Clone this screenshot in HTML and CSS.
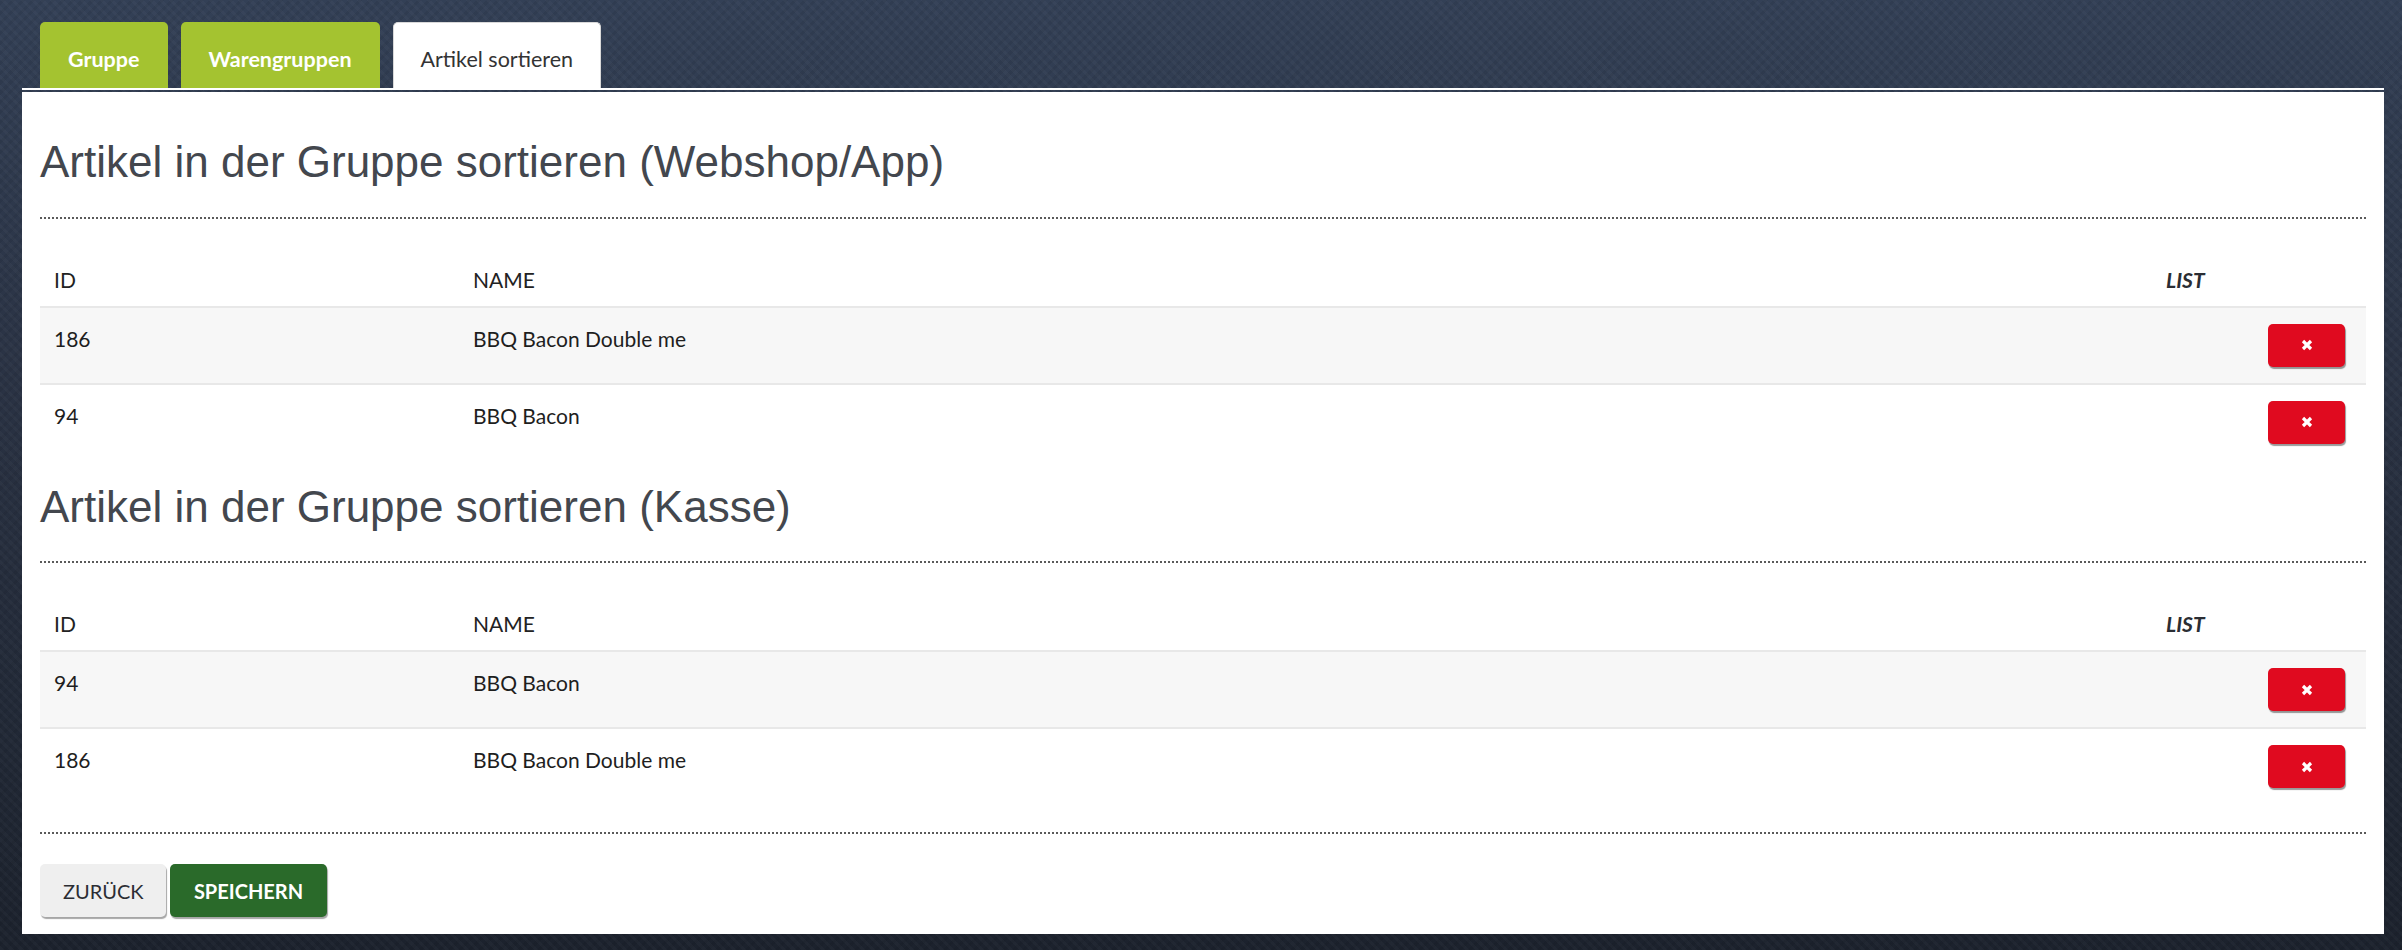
FILE: index.html
```html
<!DOCTYPE html>
<html lang="de">
<head>
    <meta charset="UTF-8">
    <meta name="viewport" content="width=device-width, initial-scale=1.0">
    <title>Artikel sortieren</title>
    <link rel="stylesheet" href="styles.css">
</head>
<body>

<div class="page">
    <ul class="tabs">
        <li class="tab">Gruppe</li>
        <li class="tab">Warengruppen</li>
        <li class="tab active">Artikel sortieren</li>
    </ul>

    <div class="panel">
        <h2 class="title">Artikel in der Gruppe sortieren (Webshop/App)</h2>
        <hr class="sep">

        <table class="sort-table">
            <colgroup>
                <col class="col-id">
                <col>
                <col class="col-list">
                <col class="col-act">
            </colgroup>
            <thead>
                <tr><th>ID</th><th>NAME</th><th class="list">LIST</th><th></th></tr>
            </thead>
            <tbody>
                <tr>
                    <td>186</td>
                    <td>BBQ Bacon Double me</td>
                    <td></td>
                    <td class="act"><button class="btn-del" type="button"><svg width="12" height="12" viewBox="0 0 12 12"><path d="M2 2 L10 10 M10 2 L2 10" stroke="#fff" stroke-width="3.2"/></svg></button></td>
                </tr>
                <tr>
                    <td>94</td>
                    <td>BBQ Bacon</td>
                    <td></td>
                    <td class="act"><button class="btn-del" type="button"><svg width="12" height="12" viewBox="0 0 12 12"><path d="M2 2 L10 10 M10 2 L2 10" stroke="#fff" stroke-width="3.2"/></svg></button></td>
                </tr>
            </tbody>
        </table>

        <h2 class="title">Artikel in der Gruppe sortieren (Kasse)</h2>
        <hr class="sep">

        <table class="sort-table">
            <colgroup>
                <col class="col-id">
                <col>
                <col class="col-list">
                <col class="col-act">
            </colgroup>
            <thead>
                <tr><th>ID</th><th>NAME</th><th class="list">LIST</th><th></th></tr>
            </thead>
            <tbody>
                <tr>
                    <td>94</td>
                    <td>BBQ Bacon</td>
                    <td></td>
                    <td class="act"><button class="btn-del" type="button"><svg width="12" height="12" viewBox="0 0 12 12"><path d="M2 2 L10 10 M10 2 L2 10" stroke="#fff" stroke-width="3.2"/></svg></button></td>
                </tr>
                <tr>
                    <td>186</td>
                    <td>BBQ Bacon Double me</td>
                    <td></td>
                    <td class="act"><button class="btn-del" type="button"><svg width="12" height="12" viewBox="0 0 12 12"><path d="M2 2 L10 10 M10 2 L2 10" stroke="#fff" stroke-width="3.2"/></svg></button></td>
                </tr>
            </tbody>
        </table>

        <hr class="sep end">

        <div class="actions">
            <button class="btn back" type="button">Zurück</button>
            <button class="btn save" type="button">Speichern</button>
        </div>
    </div>
</div>

</body>
</html>
```

FILE: styles.css
```css
html, body {
    height: 100%;
}

body {
    margin: 0;
    font-family: Lato, "Open Sans", sans-serif;
    color: #1e1e1e;
    background-color: #262e3c;
    background-image:
        repeating-linear-gradient(45deg, rgba(255, 255, 255, 0.025) 0 3px, transparent 3px 7px),
        repeating-linear-gradient(-45deg, rgba(0, 0, 0, 0.06) 0 3px, transparent 3px 7px),
        linear-gradient(180deg, #334056 0%, #2b3446 35%, #1c222d 100%);
}

.page {
    padding: 22px 18px 0 22px;
}

/* tabs */
.tabs {
    list-style: none;
    margin: 0 0 2px;
    padding: 0 0 0 18px;
    display: flex;
    gap: 13px;
    border-bottom: 2px solid #ffffff;
}

.tab {
    box-sizing: border-box;
    height: 66px;
    padding: 24px 28px 0;
    font-size: 21.5px;
    line-height: 26px;
    font-weight: 700;
    color: #ffffff;
    background-color: #a4c330;
    border-radius: 5px 5px 0 0;
}

.tab.active {
    background-color: #ffffff;
    color: #333333;
    font-weight: 400;
    border: 1px solid #d9d9d9;
    border-bottom: none;
    padding-top: 23px;
    padding-left: 27px;
    padding-right: 27px;
}

/* panel */
.panel {
    background-color: #ffffff;
    padding: 23px 18px 17px;
}

.title {
    margin: 22px 0 30px;
    font-family: "Liberation Sans", Arial, sans-serif;
    font-weight: 400;
    font-size: 44px;
    line-height: 49.5px;
    color: #43474e;
}

.sep {
    height: 0;
    margin: 0 0 27px;
    border: none;
    border-top: 2px dotted #5a5a5a;
}

.sep.end {
    margin: 28px 0 30px;
}

/* tables */
.sort-table {
    width: 100%;
    table-layout: fixed;
    border-collapse: separate;
    border-spacing: 0;
    font-size: 21px;
}

.col-id {
    width: 419px;
}

.col-list {
    width: 102px;
}

.col-act {
    width: 112px;
}

.sort-table th {
    padding: 20px 14px 12px;
    line-height: 28px;
    text-align: left;
    font-weight: 400;
    color: #222222;
}

.sort-table th.list {
    font-style: italic;
    font-weight: 700;
    color: #2a2d33;
}

.sort-table td {
    padding: 16px 14px;
    line-height: 30px;
    vertical-align: top;
    border-top: 2px solid #e8e8e8;
}

.sort-table tbody tr:nth-child(odd) td {
    background-color: #f7f7f7;
}

.sort-table td.act {
    padding-right: 21px;
}

.btn-del {
    display: flex;
    align-items: center;
    justify-content: center;
    width: 77px;
    height: 43px;
    padding: 0;
    border: none;
    border-radius: 5px;
    background-color: #e00a1f;
    box-shadow: 1px 2px 1px rgba(0, 0, 0, 0.4);
    cursor: pointer;
}

/* footer buttons */
.actions {
    display: flex;
    gap: 4px;
}

.btn {
    height: 53px;
    padding: 0 23px;
    border: none;
    border-radius: 5px;
    font-family: Lato, sans-serif;
    font-size: 20px;
    text-transform: uppercase;
    box-shadow: 1px 2px 1px rgba(0, 0, 0, 0.35);
    cursor: pointer;
}

.btn.back {
    width: 126px;
    background-color: #efefef;
    color: #2b2d33;
}

.btn.save {
    width: 157px;
    background-color: #2a6a2a;
    color: #ffffff;
    font-weight: 700;
}
```
